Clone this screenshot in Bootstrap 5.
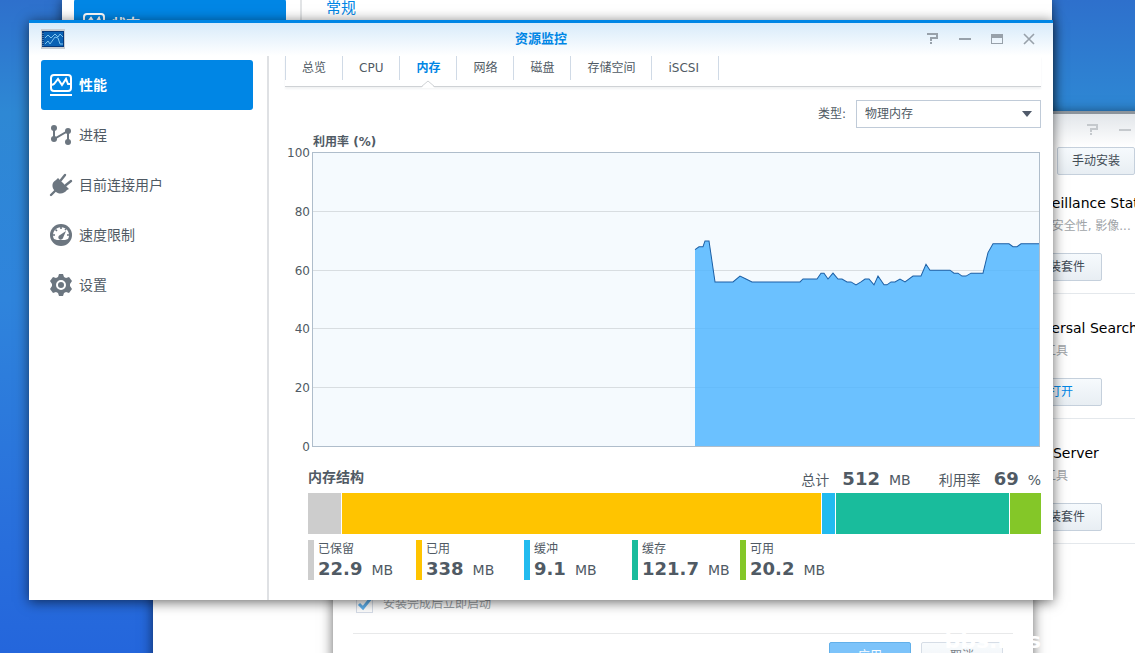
<!DOCTYPE html>
<html lang="zh-CN">
<head>
<meta charset="utf-8">
<meta name="viewport" content="width=device-width, initial-scale=1">
<title>资源监控</title>
<link href="https://cdn.jsdelivr.net/npm/bootstrap@5.3.0/dist/css/bootstrap.min.css" rel="stylesheet">
<style>
  :root { --ink: #505a64; --blue: #0086e5; --rule: #cfd2d5; }
  body {
    font: 12px/18px "DejaVu Sans", "Noto Sans CJK SC", sans-serif;
    color: var(--ink);
    background: linear-gradient(#2e70cc 0, #2e88d4 112px, #2f84dc 300px, #2970dc 520px, #2466dc 100%);
  }
  .win { position: absolute; background: #fff; box-shadow: 0 2px 12px rgba(0, 0, 0, .6); }
  .win-settings { top: -1px; left: 62px; right: 83px; height: 300px; }
  .win-packages { top: 111px; left: 153px; right: -65px; bottom: -40px; border-top: 3px solid #8c949c; }
  .win-wizard { top: 520px; left: 333px; right: 102px; bottom: -40px; padding: 75px 20px 0; }
  .win-monitor { top: 20px; left: 29px; right: 82px; border-top: 3px solid var(--blue); }
  .title-strip { height: 33px; padding: 0 12px 2px; background: linear-gradient(#d8ebfa, #fff); }
  .title-strip h1 { font-size: 13px; line-height: 18px; color: var(--blue); }
  .title-strip .tools { margin-right: -4px; }
  .tool { width: 32px; height: 31px; border: 0; padding: 0; background: none; color: #98a1aa; display: flex; align-items: center; justify-content: center; }
  .side { width: 240px; padding: 4px 14px 0 12px; border-right: 2px solid #dfe1e4; }
  .side-item { height: 50px; padding-left: 8px; gap: 6px; font-size: 14px; line-height: 20px; color: var(--ink); border-radius: 3px; }
  .side-item svg { color: #6c7680; }
  .side-item.active { background: var(--blue); color: #fff; font-weight: bold; }
  .side-item.active svg { color: #fff; }
  .pane { padding: 0 12px 20px 16px; }
  .tab-strip { height: 31px; border-bottom: 1px solid var(--rule); box-shadow: 0 2px 2px #f2f3f4; }
  .tab-strip a { display: block; height: 24px; padding: 3px 16px; border-left: 1px solid #d0dae6; color: var(--ink); position: relative; }
  .tab-strip li:last-child a { min-width: 68px; border-right: 1px solid #d0dae6; }
  .tab-strip a.active { color: var(--blue); font-weight: bold; }
  .tab-strip a.active svg { position: absolute; left: 50%; bottom: -8px; margin-left: -7px; }
  .kind-row { gap: 10px; margin-top: 13px; }
  .kind { width: 185px; height: 28px; font-size: 12px; line-height: 18px; padding: 4px 24px 4px 8px; color: var(--ink); border: 1px solid #c0cbd8; border-radius: 0;
    background: #fff url("data:image/svg+xml,%3Csvg xmlns='http://www.w3.org/2000/svg' width='12' height='6'%3E%3Cpath fill='%23505a6a' d='M1 0h10L6 6z'/%3E%3C/svg%3E") no-repeat right 7px center / 12px 6px; }
  .chart-title { font-size: 12px; line-height: 18px; padding: 0 0 1px 28px; margin-top: 5px; }
  .axis { width: 27px; margin: -8px 0 -9px; padding-right: 2px; text-align: right; }
  .plot { height: 295px; margin-right: 1px; border: 1px solid #afbdcb; background: #f5fafe; }
  .plot svg { width: 100%; height: 100%; }
  .plot line, .plot polyline { vector-effect: non-scaling-stroke; }
  .memory { padding-left: 23px; margin-top: 20px; }
  .memory h2 { font-size: 14px; line-height: 20px; }
  .figure-sum { font-size: 14px; line-height: 24px; }
  .figure-sum .num { margin: 0 9px 0 13px; }
  .num { font-size: 18px; font-weight: bold; margin-right: 9px; }
  .stack { height: 41px; gap: 1px; margin-top: 1px; }
  .legend-row { margin-top: 6px; }
  .key { width: 108px; height: 40px; padding-left: 4px; border-left: 6px solid; }
  .key-label { line-height: 18px; color: var(--ink); }
  .key-value { font-size: 14px; line-height: 22px; color: var(--ink); }
  .c-reserved { background: #cdcdcd; } .k-reserved { border-color: #cdcdcd; }
  .c-used { background: #ffc400; } .k-used { border-color: #ffc400; }
  .c-buffer { background: #22bbef; } .k-buffer { border-color: #22bbef; }
  .c-cache { background: #19bc9c; } .k-cache { border-color: #19bc9c; }
  .c-free { background: #84c728; } .k-free { border-color: #84c728; }
  .push { height: 28px; font-size: 12px; line-height: 18px; padding: 4px 0; color: #414b55; border: 1px solid #c5d0dc; border-radius: 2px; background: linear-gradient(#f6fafd, #e8eef3); }
  .push.go { color: var(--blue); }
  .pkg-head { height: 33px; padding-right: 59px; background: linear-gradient(#e2e6ea, #fff); }
  .pkg-head .tool { color: #c5c9cd; }
  .pkg-bar { padding-right: 65px; }
  .pkg-bar .push { width: 78px; }
  .pkg-list { width: 180px; }
  .pkg { height: 125px; padding-top: 24px; border-bottom: 1px solid #e4e8ec; }
  .pkg:first-child { height: 119px; padding-top: 18px; }
  .pkg h3 { font-size: 14px; line-height: 20px; color: #000; }
  .pkg p { color: #a0a4a8; }
  .pkg .push { width: 82px; margin-top: 18px; }
  .set-side { width: 240px; padding: 0 14px 0 12px; border-right: 2px solid #e2e4e6; }
  .set-pane { padding-left: 24px; font-size: 15px; line-height: 18px; color: var(--blue); }
  .wiz-check { appearance: none; width: 17px; height: 17px; margin: 0 10px 0 3px; border: 1px solid #d6dde8; background: #fff; }
  .wiz-check:checked { background: url("data:image/svg+xml,%3Csvg xmlns='http://www.w3.org/2000/svg' width='15' height='15'%3E%3Cpath fill='none' stroke='%235fb0ec' stroke-width='3' d='M2 7l4 4 8-10'/%3E%3C/svg%3E"); }
  .wiz-label { color: #989da2; }
  .wiz-foot { margin-top: 20px; padding: 8px 10px 0; gap: 10px; border-top: 1px solid #e8e9ea; }
  .wiz-foot .push { width: 82px; opacity: .7; }
  .wiz-foot .primary { opacity: 1; color: #fff; background: #7cc3fa; border-color: #62b0ea; }
  .watermark { position: absolute; right: 94px; bottom: 0; font-size: 22px; line-height: 24px; font-weight: bold; color: #fff; }
</style>
</head>
<body class="vh-100 overflow-hidden position-relative">

<svg class="d-none">
  <symbol id="i-help" viewBox="0 0 12 12"><path d="M0 0h11v6H5v2H3V4h6V2H0zM3 9h2v2H3z" fill="currentColor"/></symbol>
  <symbol id="i-perf" viewBox="0 0 24 24"><rect x="2" y="2" width="20" height="16" rx="3" fill="none" stroke="currentColor" stroke-width="2"/><path d="M1 22h22M3 12l2-1 4-5 4 6 4-6 2 5h2" fill="none" stroke="currentColor" stroke-width="2"/></symbol>
</svg>

<section class="win win-settings d-flex">
  <div class="set-side">
    <a href="#" class="side-item active d-flex align-items-center text-decoration-none"><svg width="24" height="24"><use href="#i-perf"/></svg>状态</a>
  </div>
  <div class="set-pane">常规</div>
</section>

<section class="win win-packages">
  <div class="pkg-head d-flex justify-content-end">
    <button class="tool" aria-label="帮助"><svg width="12" height="12"><use href="#i-help"/></svg></button>
    <button class="tool" aria-label="最小化"><svg width="12" height="2"><path d="M0 0h12v2H0z" fill="currentColor"/></svg></button>
  </div>
  <div class="pkg-bar d-flex justify-content-end"><button class="push">手动安装</button></div>
  <div class="pkg-list ms-auto">
    <div class="pkg"><h3 class="mb-0 fw-normal text-nowrap">Surveillance Station</h3><p class="mb-0 mt-1">监控, 安全性, 影像...</p><button class="push">安装套件</button></div>
    <div class="pkg"><h3 class="mb-0 fw-normal">Universal Search</h3><p class="mb-0 mt-1">实用工具</p><button class="push go">打开</button></div>
    <div class="pkg"><h3 class="mb-0 fw-normal">VPN Server</h3><p class="mb-0 mt-1">实用工具</p><button class="push">安装套件</button></div>
  </div>
</section>

<section class="win win-wizard">
  <div class="d-flex align-items-center"><input type="checkbox" class="wiz-check" id="autostart" checked><label for="autostart" class="wiz-label">安装完成后立即启动</label></div>
  <div class="wiz-foot d-flex justify-content-end"><button class="push primary">应用</button><button class="push">取消</button></div>
</section>
<div class="watermark">bbs.nas</div>

<main class="win win-monitor">
  <header class="title-strip d-flex align-items-center">
    <div class="col d-flex">
      <svg width="24" height="20" viewBox="0 0 24 20"><path d="M0 0h24v20H0z" fill="#c9ced3"/><path d="M1 2h22v16H1z" fill="#063a7d"/><path d="M3 3h19v14H3z" fill="#0a62b4"/><path d="M2 4v13" stroke="#7fb4dd" stroke-dasharray="1 1"/><path d="M4 9l3-3 3 3 4-4 3 3 2-3 3 3M4 15l3-3 2 3 5-7 3 1 2 6h3" fill="none" stroke="#7ec4ee"/></svg>
    </div>
    <h1 class="mb-0 fw-bold">资源监控</h1>
    <div class="col d-flex justify-content-end">
      <div class="tools d-flex">
        <button class="tool" aria-label="帮助"><svg width="12" height="12"><use href="#i-help"/></svg></button>
        <button class="tool" aria-label="最小化"><svg width="12" height="2"><path d="M0 0h12v2H0z" fill="currentColor"/></svg></button>
        <button class="tool" aria-label="最大化"><svg width="12" height="10"><path d="M0 0h12v10H0zM1 4v5h10V4z" fill="currentColor" fill-rule="evenodd"/></svg></button>
        <button class="tool" aria-label="关闭"><svg width="12" height="12"><path d="M1 1l10 10M11 1L1 11" stroke="currentColor" stroke-width="1.6"/></svg></button>
      </div>
    </div>
  </header>

  <div class="d-flex">
    <nav class="side flex-shrink-0">
      <a href="#" class="side-item active d-flex align-items-center text-decoration-none"><svg width="24" height="24"><use href="#i-perf"/></svg>性能</a>
      <a href="#" class="side-item d-flex align-items-center text-decoration-none"><svg width="24" height="24" fill="currentColor"><path d="M5 5v11L19 8v11" fill="none" stroke="currentColor" stroke-width="2"/><circle cx="5" cy="5" r="3"/><circle cx="5" cy="16" r="3"/><circle cx="19" cy="8" r="3"/><circle cx="19" cy="19" r="3"/></svg>进程</a>
      <a href="#" class="side-item d-flex align-items-center text-decoration-none"><svg width="24" height="24" fill="currentColor"><path d="M9 5l11 11-2 1c-3 4-8 5-12 1-4-4-3-9 1-11z"/><path d="M12 7l4-5M17 12l5-4M2 22l5-5" fill="none" stroke="currentColor" stroke-width="2.4" stroke-linecap="round"/></svg>目前连接用户</a>
      <a href="#" class="side-item d-flex align-items-center text-decoration-none"><svg width="24" height="24"><circle cx="12" cy="12" r="11" fill="currentColor"/><path d="M5 16a8 8 0 1 1 14 0l-3 1H8z" fill="#fff"/><path d="M12 4v2M6.500 6.500l1.500 1.500M4 12h2M20 12h-2M17 6l-1 1" stroke="currentColor" stroke-width="1.6"/><path d="M17 8l-3 7a2.400 2.400 0 1 1-3-3z" fill="currentColor"/></svg>速度限制</a>
      <a href="#" class="side-item d-flex align-items-center text-decoration-none"><svg width="24" height="24"><path d="M10 1h4l1 3 2 1 3-1 3 4-2 3v2l2 3-3 4-3-1-2 1-1 3h-4l-1-3-2-1-3 1-3-4 2-3v-2L1 8l3-4 3 1 2-1z" fill="currentColor"/><circle cx="12" cy="12" r="4" fill="none" stroke="#fff" stroke-width="2"/></svg>设置</a>
    </nav>

    <div class="pane flex-grow-1">
      <ul class="tab-strip list-unstyled d-flex mb-0">
        <li><a href="#" class="text-decoration-none">总览</a></li>
        <li><a href="#" class="text-decoration-none">CPU</a></li>
        <li><a href="#" class="text-decoration-none active">内存<svg width="14" height="8"><path d="M0 8l7-7 7 7z" fill="#fff"/><path d="M0 7l7-6 7 6" fill="none" stroke="#cfd2d5"/></svg></a></li>
        <li><a href="#" class="text-decoration-none">网络</a></li>
        <li><a href="#" class="text-decoration-none">磁盘</a></li>
        <li><a href="#" class="text-decoration-none">存储空间</a></li>
        <li><a href="#" class="text-decoration-none">iSCSI</a></li>
      </ul>

      <div class="kind-row d-flex justify-content-end align-items-center">
        <label for="kind">类型:</label>
        <select id="kind" class="form-select kind"><option>物理内存</option></select>
      </div>

      <h2 class="chart-title fw-bold mb-0">利用率 (%)</h2>
      <div class="d-flex">
        <div class="axis flex-shrink-0 d-flex flex-column justify-content-between"><span>100</span><span>80</span><span>60</span><span>40</span><span>20</span><span>0</span></div>
        <div class="plot flex-grow-1">
          <svg class="d-block" viewBox="0 0 726 100" preserveAspectRatio="none">
            <g stroke="#d8dde1" shape-rendering="crispEdges"><line x2="726" y1="20" y2="20"/><line x2="726" y1="40" y2="40"/><line x2="726" y1="60" y2="60"/><line x2="726" y1="80" y2="80"/></g>
            <polygon id="area" fill="#4db4ff" fill-opacity=".82"/>
            <polyline id="curve" fill="none" stroke="#1c5fa5"/>
          </svg>
        </div>
      </div>

      <section class="memory">
        <div class="d-flex align-items-start">
          <h2 class="fw-bold mb-0 me-auto">内存结构</h2>
          <div class="figure-sum">总计<span class="num">512</span>MB</div>
          <div class="figure-sum ms-4 ps-1">利用率<span class="num">69</span>%</div>
        </div>
        <div class="stack d-flex">
          <div class="c-reserved" style="flex:33 1 0"></div><div class="c-used" style="flex:479 1 0"></div><div class="c-buffer" style="flex:13 1 0"></div><div class="c-cache" style="flex:173 1 0"></div><div class="c-free" style="flex:31 1 0"></div>
        </div>
        <div class="legend-row d-flex">
          <div class="key k-reserved"><div class="key-label">已保留</div><div class="key-value text-nowrap"><span class="num">22.9</span>MB</div></div>
          <div class="key k-used"><div class="key-label">已用</div><div class="key-value text-nowrap"><span class="num">338</span>MB</div></div>
          <div class="key k-buffer"><div class="key-label">缓冲</div><div class="key-value text-nowrap"><span class="num">9.1</span>MB</div></div>
          <div class="key k-cache"><div class="key-label">缓存</div><div class="key-value text-nowrap"><span class="num">121.7</span>MB</div></div>
          <div class="key k-free"><div class="key-label">可用</div><div class="key-value text-nowrap"><span class="num">20.2</span>MB</div></div>
        </div>
      </section>
    </div>
  </div>
</main>

<script src="https://cdn.jsdelivr.net/npm/bootstrap@5.3.0/dist/js/bootstrap.bundle.min.js"></script>
<script>
  // Memory samples: [position on the time axis, utilisation in percent]
  const samples = [[382,67],[386,68],[390,68],[392,70],[396,70],[402,56],[420,56],[427,58],[433,57],[439,56],[487,56],[490,57],[504,57],[508,59],[511,59],[515,57],[520,59],[525,57],[529,57],[534,56],[538,56],[543,55],[548,56],[552,57],[556,57],[561,55],[565,58],[571,55],[574,55],[578,56],[582,56],[587,57],[592,56],[600,58],[608,58],[613,62],[617,60],[637,60],[641,59],[645,59],[649,58],[653,58],[658,59],[670,59],[675,66],[680,69],[696,69],[700,68],[704,68],[708,69],[726,69]];
  const pts = samples.map(([x, v]) => x + ',' + (100 - v)).join(' ');
  document.getElementById('curve').setAttribute('points', pts);
  document.getElementById('area').setAttribute('points', '382,100 ' + pts + ' 726,100');
</script>
</body>
</html>
